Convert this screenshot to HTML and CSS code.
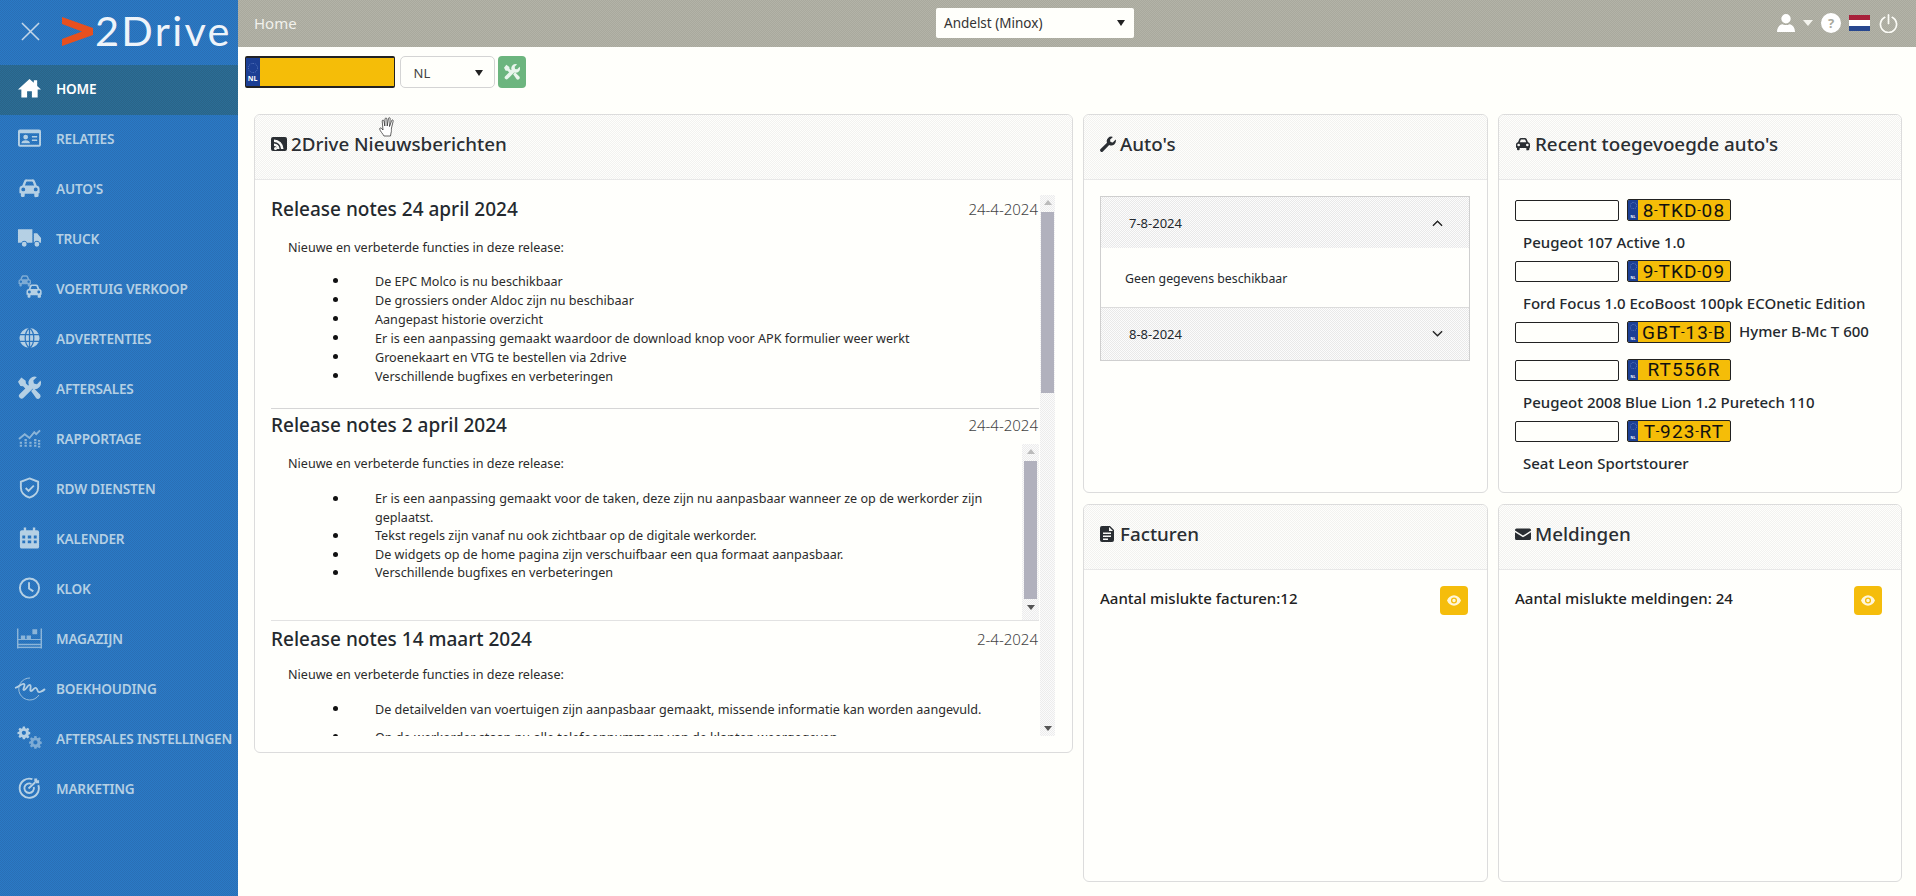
FILE: index.html
```html
<!DOCTYPE html>
<html lang="nl">
<head>
<meta charset="utf-8">
<title>2Drive</title>
<link rel="stylesheet" href="styles.css">
</head>
<body>
<div class="app">
  <aside class="sidebar">
    <div class="brand">
      <svg class="close" viewBox="0 0 20 20"><path d="M1 1l18 18M19 1L1 19"/></svg>
      <svg class="chevron" viewBox="0 0 31 29"><path d="M0 0l31 11v7L0 29v-7l20-7.500L0 7z"/></svg>
      <span class="logo">2Drive</span>
    </div>
    <nav class="menu">
      <a class="item active"><svg class="ico" viewBox="0 0 24 24"><path d="M12 2.500 0 13.500h3.500V22h6v-6.500h5V22h6v-8.500H24l-4-3.700V4h-3.500v2.600z"/></svg><span>Home</span></a>
      <a class="item"><svg class="ico" viewBox="0 0 24 24"><path fill-rule="evenodd" d="M2 3h20a2 2 0 0 1 2 2v14a2 2 0 0 1-2 2H2a2 2 0 0 1-2-2V5a2 2 0 0 1 2-2zm0 4v12h20V7zm6 1.500a2.500 2.500 0 1 1 0 5 2.500 2.500 0 0 1 0-5zM3.500 17.500c0-2 2-3.200 4.500-3.200s4.500 1.200 4.500 3.200zM14.500 10H20v1.500h-5.500zm0 3.500H20V15h-5.500z"/></svg><span>Relaties</span></a>
      <a class="item"><svg class="ico" viewBox="0 0 24 24"><use href="#car"/></svg><span>Auto's</span></a>
      <a class="item"><svg class="ico wide" viewBox="0 0 26 24"><path d="M1 3h15v14h-5.500a3.200 3.200 0 0 0-6 0H1zM17.500 7h3.500l4 5v5h-1.300a3.200 3.200 0 0 0-6 0h-.2zM7.500 16a2.500 2.500 0 1 1 0 5 2.500 2.500 0 0 1 0-5zm13.200 0a2.500 2.500 0 1 1 0 5 2.500 2.500 0 0 1 0-5z"/></svg><span>Truck</span></a>
      <a class="item"><svg class="ico wide" viewBox="0 0 26 24"><use href="#car" class="dim" transform="translate(0 -3) scale(.62)"/><use href="#car" transform="translate(8 6) scale(.75)"/></svg><span>Voertuig verkoop</span></a>
      <a class="item"><svg class="ico" viewBox="0 0 24 24"><circle cx="12" cy="12" r="10.500"/><path class="cut" d="M1 8.500h22M1 15.500h22M12 1v22M12 1.500C6 6 6 18 12 22.500M12 1.500C18 6 18 18 12 22.500"/></svg><span>Advertenties</span></a>
      <a class="item"><svg class="ico" viewBox="0 0 24 24"><use href="#tools"/></svg><span>Aftersales</span></a>
      <a class="item"><svg class="ico dimmed" viewBox="0 0 24 24"><path class="line" d="M1 13l6-5 5 4 5-6 2 2 4-4"/><path class="bars" d="M3 16v6M8 13v9M13 16v6M18 13v9M22 14v8"/></svg><span>Rapportage</span></a>
      <a class="item"><svg class="ico" viewBox="0 0 24 24"><path class="line" d="M12 2l9 3.500v6c0 5-3.600 8.800-9 10.500-5.400-1.700-9-5.500-9-10.500v-6z"/><path class="line" d="M8 12l3 3 5.500-5.500"/></svg><span>RDW diensten</span></a>
      <a class="item"><svg class="ico" viewBox="0 0 24 24"><path fill-rule="evenodd" d="M6 1h2.500v3H15.500V1H18v3h2a2 2 0 0 1 2 2v15a2 2 0 0 1-2 2H4a2 2 0 0 1-2-2V6a2 2 0 0 1 2-2h2zM4.500 9.500v3h3v-3zm5.700 0v3h3.600v-3zm6.300 0v3h3v-3zM4.500 14.500v3h3v-3zm5.700 0v3h3.600v-3zm6.300 0v3h3v-3z"/></svg><span>Kalender</span></a>
      <a class="item"><svg class="ico" viewBox="0 0 24 24"><circle class="line" cx="12" cy="12" r="10"/><path class="line" d="M11.500 6v6.500l4.500 3"/></svg><span>Klok</span></a>
      <a class="item"><svg class="ico wide dimmed" viewBox="0 0 26 24"><path d="M0 2h1.500v21H0zM24.500 2H26v21h-1.500zM1 18h24v1.500H1zM1 13h24v1H1zM16 3h5v5h-5zM4 9.500h4.500v4.500H4zM10 9.500h4.500v4.500H10z" /><path d="M1 21h24v1.500H1z"/></svg><span>Magazijn</span></a>
      <a class="item"><svg class="ico wider" viewBox="0 0 34 24"><path class="thin" d="M17 2a11 11 0 1 0 9 17"/><path class="squig" d="M2 12c4-1 7-5 9-4s-2 6 0 6 4-6 6-5-1 6 1 6 3-4 5-3 1 5 4 4 4-2 5-3"/></svg><span>Boekhouding</span></a>
      <a class="item"><svg class="ico wide" viewBox="0 0 26 24"><use href="#gear" transform="translate(0 0) scale(.55)"/><use href="#gear" class="dim" transform="translate(12 10) scale(.55)"/></svg><span>Aftersales instellingen</span></a>
      <a class="item"><svg class="ico" viewBox="0 0 24 24"><path class="line" d="M15 2.800A10 10 0 1 0 21.200 9"/><path class="line" d="M14 7.800A5 5 0 1 0 16.500 11"/><path class="line" d="M11 12.500L18 6"/><path d="M17 2h3v2h2v3h-3l-2-2z"/></svg><span>Marketing</span></a>
    </nav>
  </aside>

  <div class="main">
    <header class="topbar">
      <div class="crumb">Home</div>
      <div class="location"><span>Andelst (Minox)</span><i class="tri"></i></div>
      <div class="tools">
        <svg class="t-user" viewBox="0 0 18 18"><path d="M9 0a4.700 4.700 0 1 1 0 9.400A4.700 4.700 0 0 1 9 0zM0 18c0-4.500 2.500-7.500 5.500-7.800 2.200 1.200 4.800 1.200 7 0C15.500 10.500 18 13.500 18 18z"/></svg>
        <i class="tri light"></i>
        <span class="t-help">?</span>
        <span class="flag"><i class="red"></i><i class="white"></i><i class="blue"></i></span>
        <svg class="t-power" viewBox="0 0 20 20"><path d="M6 3.500a8.500 8.500 0 1 0 8 0M10 1v9"/></svg>
      </div>
    </header>

    <div class="content">
      <div class="toolbar">
        <div class="plate plate-lg"><div class="eu"><span class="stars"></span><span class="nl">NL</span></div></div>
        <div class="country"><span>NL</span><i class="tri"></i></div>
        <button class="tool-btn"><svg viewBox="0 0 24 24"><use href="#tools"/></svg></button>
      </div>

      <div class="grid">
        <section class="card news">
          <h2 class="card-head"><svg class="h-ico" viewBox="0 0 16 16"><path fill-rule="evenodd" d="M2 1h12a2 2 0 0 1 2 2v10a2 2 0 0 1-2 2H2a2 2 0 0 1-2-2V3a2 2 0 0 1 2-2zm1 2.500V6a7 7 0 0 1 7 7h2.500A9.500 9.500 0 0 0 3 3.500zm0 4V10a3 3 0 0 1 3 3h2.500A5.500 5.500 0 0 0 3 7.500zM4.500 11a1.500 1.500 0 1 0 0 3 1.500 1.500 0 0 0 0-3z"/></svg>2Drive Nieuwsberichten</h2>
          <div class="news-body">
            <div class="notes">
              <article class="note first">
                <div class="note-head"><h3>Release notes 24 april 2024</h3><time>24-4-2024</time></div>
                <p class="intro">Nieuwe en verbeterde functies in deze release:</p>
                <ul>
                  <li>De EPC Molco is nu beschikbaar</li>
                  <li>De grossiers onder Aldoc zijn nu beschibaar</li>
                  <li>Aangepast historie overzicht</li>
                  <li>Er is een aanpassing gemaakt waardoor de download knop voor APK formulier weer werkt</li>
                  <li>Groenekaart en VTG te bestellen via 2drive</li>
                  <li>Verschillende bugfixes en verbeteringen</li>
                </ul>
              </article>
              <article class="note second">
                <div class="note-head"><h3>Release notes 2 april 2024</h3><time>24-4-2024</time></div>
                <div class="inner">
                  <div class="inner-text">
                    <p class="intro">Nieuwe en verbeterde functies in deze release:</p>
                    <ul>
                      <li>Er is een aanpassing gemaakt voor de taken, deze zijn nu aanpasbaar wanneer ze op de werkorder zijn geplaatst.</li>
                      <li>Tekst regels zijn vanaf nu ook zichtbaar op de digitale werkorder.</li>
                      <li>De widgets op de home pagina zijn verschuifbaar een qua formaat aanpasbaar.</li>
                      <li>Verschillende bugfixes en verbeteringen</li>
                    </ul>
                  </div>
                  <div class="scrollbar inner-bar"><b class="up"></b><b class="thumb"></b><b class="down"></b></div>
                </div>
              </article>
              <article class="note third">
                <div class="note-head"><h3>Release notes 14 maart 2024</h3><time>2-4-2024</time></div>
                <p class="intro">Nieuwe en verbeterde functies in deze release:</p>
                <ul>
                  <li>De detailvelden van voertuigen zijn aanpasbaar gemaakt, missende informatie kan worden aangevuld.</li>
                  <li>Op de werkorder staan nu alle telefoonnummers van de klanten weergegeven</li>
                </ul>
              </article>
            </div>
            <div class="scrollbar outer-bar"><b class="up"></b><b class="thumb"></b><b class="spacer"></b><b class="down"></b></div>
          </div>
        </section>

        <section class="card">
          <h2 class="card-head"><svg class="h-ico" viewBox="0 0 16 16"><path d="M15.700 3.600l-2.900 2.800-2.300-.4-.5-2.300L12.900.9A4.600 4.600 0 0 0 7 6.800L.6 13.100a1.600 1.600 0 0 0 2.300 2.300L9.200 9a4.600 4.600 0 0 0 6.500-5.400z"/></svg>Auto's</h2>
          <div class="accordion">
            <div class="acc-head"><span>7-8-2024</span><svg viewBox="0 0 12 8"><path d="M1 7l5-5 5 5"/></svg></div>
            <div class="acc-body">Geen gegevens beschikbaar</div>
            <div class="acc-head last"><span>8-8-2024</span><svg viewBox="0 0 12 8"><path d="M1 1l5 5 5-5"/></svg></div>
          </div>
        </section>

        <section class="card">
          <h2 class="card-head"><svg class="h-ico" viewBox="0 0 24 24"><use href="#car"/></svg>Recent toegevoegde auto's</h2>
          <div class="cars">
            <div class="car"><div class="car-line"><input class="box"><div class="plate plate-sm"><div class="eu"><span class="stars"></span><span class="nl">NL</span></div><span class="reg">8<i>-</i>TKD<i>-</i>08</span></div></div><div class="car-name">Peugeot 107 Active 1.0</div></div>
            <div class="car"><div class="car-line"><input class="box"><div class="plate plate-sm"><div class="eu"><span class="stars"></span><span class="nl">NL</span></div><span class="reg">9<i>-</i>TKD<i>-</i>09</span></div></div><div class="car-name">Ford Focus 1.0 EcoBoost 100pk ECOnetic Edition</div></div>
            <div class="car inline"><div class="car-line"><input class="box"><div class="plate plate-sm"><div class="eu"><span class="stars"></span><span class="nl">NL</span></div><span class="reg">GBT<i>-</i>13<i>-</i>B</span></div><div class="car-name">Hymer B-Mc T 600</div></div></div>
            <div class="car"><div class="car-line"><input class="box"><div class="plate plate-sm"><div class="eu"><span class="stars"></span><span class="nl">NL</span></div><span class="reg">RT556R</span></div></div><div class="car-name">Peugeot 2008 Blue Lion 1.2 Puretech 110</div></div>
            <div class="car"><div class="car-line"><input class="box"><div class="plate plate-sm"><div class="eu"><span class="stars"></span><span class="nl">NL</span></div><span class="reg">T<i>-</i>923<i>-</i>RT</span></div></div><div class="car-name">Seat Leon Sportstourer</div></div>
          </div>
        </section>

        <section class="card">
          <h2 class="card-head"><svg class="h-ico" viewBox="0 0 16 16"><path fill-rule="evenodd" d="M2 0h8l4 4v10a2 2 0 0 1-2 2H2a2 2 0 0 1-2-2V2a2 2 0 0 1 2-2zm1 6.500V8h8V6.500zm0 3V11h8V9.500zm0 3V14h5v-1.500zM9 1v4h4z"/></svg>Facturen</h2>
          <div class="stat"><span>Aantal mislukte facturen:12</span><button class="eye"><svg viewBox="0 0 16 12"><use href="#eye"/></svg></button></div>
        </section>

        <section class="card">
          <h2 class="card-head"><svg class="h-ico" viewBox="0 0 16 16"><path d="M1.500 2.500h13A1.500 1.500 0 0 1 16 4v.5L8 9.500 0 4.500V4a1.500 1.500 0 0 1 1.500-1.500zM0 6.300l8 5 8-5V12.500A1.500 1.500 0 0 1 14.500 14h-13A1.500 1.500 0 0 1 0 12.500z"/></svg>Meldingen</h2>
          <div class="stat"><span>Aantal mislukte meldingen: 24</span><button class="eye"><svg viewBox="0 0 16 12"><use href="#eye"/></svg></button></div>
        </section>
      </div>

      <svg class="cursor" viewBox="0 0 18 20"><path d="M5 19c-1-2-4-5-4.300-7-.2-1.300 1.300-1.300 2-.5L4 13 3.200 4c0-1.200 1.600-1.200 1.800 0l.8 5L6 2c.1-1.300 1.800-1.300 1.900 0l.3 7L9.500 1.500c.2-1.200 1.800-1 1.700.3L10.500 9.500 12.700 3.500c.4-1.100 1.800-.6 1.500.6L12.500 11c-.3 2 .2 3-.5 5l-.5 3z"/></svg>
    </div>
  </div>
</div>

<svg class="defs" width="0" height="0">
  <defs>
    <symbol id="car" viewBox="0 0 24 24" overflow="visible"><path fill-rule="evenodd" d="M4.500 9.500l2-5A3 3 0 0 1 9.200 3h5.600a3 3 0 0 1 2.700 1.500l2 5c1.700.3 3 1.600 3 3.500v4.500h-1V20a1.500 1.500 0 0 1-1.500 1.500h-1A1.500 1.500 0 0 1 17 20v-2H7v2a1.500 1.500 0 0 1-1.500 1.500h-1A1.500 1.500 0 0 1 3 20v-2.500H1.500V13c0-1.900 1.300-3.200 3-3.500zM7.200 9.500h9.600L15.500 6a1 1 0 0 0-.9-.700H9.400a1 1 0 0 0-.9.700zM5.500 15.500a2 2 0 1 0 0-4 2 2 0 0 0 0 4zm13 0a2 2 0 1 0 0-4 2 2 0 0 0 0 4z"/></symbol>
    <symbol id="tools" viewBox="0 0 24 24" overflow="visible"><path d="M3.500 1L8 4.500l.3 2.800 3 3-3 3-3-3-2.800-.3L0 5.500z"/><path d="M23.500 4.200L19.800 8l-3.200-.6-.6-3.200L19.700.5a6.500 6.500 0 0 0-8.400 8.300L1.800 18.300a2.800 2.800 0 0 0 4 4l9.500-9.500a6.500 6.500 0 0 0 8.200-8.600z"/><path d="M13.700 15.200l2.900-2.900 6.400 6.400a2.900 2.900 0 0 1-4 4.100z"/></symbol>
    <symbol id="gear" viewBox="0 0 24 24" overflow="visible"><path fill-rule="evenodd" d="M10 0h4l.7 3.400 1.900.8L19.500 2.300l2.800 2.800-1.900 2.900.8 1.900L24 10.700v3.900l-2.800.700-.8 1.900 1.900 2.900-2.800 2.800-2.900-1.900-1.900.8L14 24h-4l-.7-3.300-1.900-.8-2.900 1.900-2.800-2.800 1.900-2.900-.8-1.900L0 14.600v-3.900l2.800-.7.8-1.900-1.900-2.900L4.500 2.300l2.900 1.900 1.900-.8zM12 8a4 4 0 1 0 0 8 4 4 0 0 0 0-8z"/></symbol>
    <symbol id="eye" viewBox="0 0 16 12" overflow="visible"><path fill-rule="evenodd" d="M8 0c3.500 0 6.500 2.400 8 6-1.500 3.600-4.500 6-8 6S1.500 9.600 0 6c1.500-3.600 4.500-6 8-6zm0 2.500a3.500 3.500 0 1 0 0 7 3.500 3.500 0 0 0 0-7zM8 4a2 2 0 1 1 0 4 2 2 0 0 1 0-4z"/></symbol>
  </defs>
</svg>
</body>
</html>
```

FILE: styles.css
```css
* { box-sizing: border-box; }
html, body { margin: 0; height: 100%; overflow: hidden; }
body {
  font-family: "Noto Sans", "Open Sans", sans-serif;
  color: #24292e;
  background: #fffffb;
  font-size: 13px;
}
.defs { display: block; height: 0; }
.app { display: flex; height: 896px; }

/* sidebar */
.sidebar {
  width: 238px; flex: none;
  background: repeating-conic-gradient(#2a7ac6 0 25%, #2a6fb5 0 50%) 0 0 / 2px 2px;
  color: #b5d0e4;
}
.brand { height: 65px; display: flex; align-items: flex-start; }
.close { width: 19px; height: 19px; margin: 22px 0 0 21px; fill: none; stroke: #c4d8ea; stroke-width: 1.6; flex: none; }
.chevron { width: 31px; height: 29px; margin: 17px 0 0 22px; fill: #e8501e; flex: none; }
.logo { font: 400 41.500px/1 "Lato", sans-serif; color: #eef4fa; margin: 10px 0 0 2px; letter-spacing: 2.300px; }
.item {
  display: flex; align-items: center; height: 50px; padding: 0 0 4px 18px; gap: 15px;
  font-weight: 600; font-size: 13.600px; text-transform: uppercase; letter-spacing: -.2px;
}
.item.active {
  color: #fff;
  background: repeating-conic-gradient(#2b6d96 0 25%, #2a6488 0 50%) 0 0 / 2px 2px;
}
.ico { width: 23px; height: 24px; fill: currentColor; flex: none; overflow: visible; }
.ico.wide { width: 25px; margin-left: -1px; margin-right: -1px; }
.ico.wider { width: 34px; margin-left: -5px; margin-right: -6px; }
.ico .dim { opacity: .6; }
.ico.dimmed { opacity: .7; }
.ico .cut { fill: none; stroke: #2a74bd; stroke-width: 1.3; }
.ico .line { fill: none; stroke: currentColor; stroke-width: 2; }
.ico .bars { fill: none; stroke: currentColor; stroke-width: 2.400; stroke-dasharray: 2 1; }
.ico .thin { fill: none; stroke: currentColor; stroke-width: .8; }
.ico .squig { fill: none; stroke: currentColor; stroke-width: 1.800; }

/* topbar */
.main { flex: 1; min-width: 0; display: flex; flex-direction: column; }
.topbar {
  height: 47px; flex: none; position: relative;
  display: flex; align-items: center; justify-content: space-between;
  padding: 0 18px 1px 16px;
  background: repeating-conic-gradient(#a9a99d 0 25%, #b3b3a8 0 50%) 0 0 / 2px 2px;
}
.crumb { color: #f1f1ec; font-size: 15px; width: 100px; }
.location {
  position: absolute; left: 698px; top: 8px; width: 198px; height: 30px;
  background: #fffffb; border-radius: 2px; display: flex; align-items: center; justify-content: space-between;
  padding: 0 9px 0 8px; font-size: 13.500px; color: #333;
}
.tri { width: 0; height: 0; border: 4.500px solid transparent; border-top: 6px solid #222; border-bottom: 0; display: block; }
.tri.light { border-top-color: #f4f4ee; border-left-width: 5px; border-right-width: 5px; }
.tools { display: flex; align-items: center; margin-left: auto; }
.t-user { width: 18px; height: 18px; fill: #fff; margin-right: 8px; }
.t-help { width: 20px; height: 20px; border-radius: 50%; background: #fff; color: #a9a99d; margin-left: 8px; font-weight: 700; font-size: 13px; line-height: 20px; text-align: center; }
.flag { width: 21px; height: 16px; margin-left: 8px; display: flex; flex-direction: column; }
.flag i { flex: 1; display: block; }
.flag .red { background: #a8213b; }
.flag .white { background: #fff; }
.flag .blue { background: #27478f; }
.t-power { width: 19px; height: 19px; margin-left: 9px; fill: none; stroke: #fbfbf6; stroke-width: 1.800; stroke-linecap: round; }

/* content */
.content { position: relative; padding: 9px 0 0 16px; flex: 1; }
.toolbar { display: flex; height: 32px; }
.plate { background: #f5bd08; border: 1px solid #222; border-radius: 2px; display: flex; overflow: hidden; }
.plate-lg { width: 150px; border-width: 2px 1.500px; margin-left: -9.500px; }
.eu { background: #1c3f94; color: #fff; display: flex; flex-direction: column; align-items: center; justify-content: space-between; flex: none; font-weight: 700; }
.plate-lg .eu { width: 14px; padding: 5px 0 3px; font-size: 7px; line-height: 8px; }
.stars { display: block; border: 1px dotted #5573bb; border-radius: 50%; width: 10px; height: 10px; }
.plate-sm .eu { width: 10px; padding: 2px 0 1px; font-size: 3.500px; line-height: 4px; }
.plate-sm .stars { width: 7px; height: 7px; }
.country {
  width: 95px; margin-left: 5px; border: 1px solid #d4d4d4; border-radius: 5px; background: #fffffb;
  display: flex; align-items: center; justify-content: space-between; padding: 2px 11px 0 13px; color: #444; font-size: 13px;
}
.tool-btn { width: 28px; margin-left: 3px; padding: 8px 6px; border: 0; border-radius: 4px; background: #6cb57e; }
.tool-btn svg { width: 16px; height: 16px; fill: #e9f5ec; display: block; }

.grid {
  display: grid; margin-top: 26px;
  grid-template-columns: 819px 405px 404px;
  grid-template-rows: 379px 378px;
  gap: 11px 10px;
}
.card { border: 1px solid #dcdcdc; border-radius: 6px; overflow: hidden; background: #fffffc; }
.news { grid-row: 1 / span 2; height: 639px; }
.card-head {
  margin: 0; height: 65px; padding: 16px 16px 0; display: flex; align-items: flex-start;
  font-size: 18.800px; line-height: 27px; font-weight: 500; color: #2a2e33;
  background: repeating-conic-gradient(#f2f2f0 0 25%, #fefefc 0 50%) 0 0 / 2px 2px;
  border-bottom: 1px solid #e8e8e8;
}
.h-ico { width: 16px; height: 16px; margin: 5px 4px 0 0; fill: #2a2e33; flex: none; }

/* news */
.news-body { display: flex; height: 557px; padding: 15px 17px 0 16px; }
.news-body > * { height: 541px; }
.notes { width: 769px; overflow: hidden; }
.note-head { display: flex; justify-content: space-between; align-items: center; height: 27px; padding-right: 1px; }
h3 { margin: 0; font-size: 19px; font-weight: 500; color: #24292e; }
time { font-size: 15px; color: #444; font-weight: 300; }
.intro { margin: 0; padding-left: 17px; line-height: 19px; font-weight: 400; color: #2b2b2b; font-size: 12.600px; }
ul { list-style: none; margin: 0; padding: 0 0 0 104px; font-weight: 400; font-size: 12.600px; line-height: 19px; color: #2b2b2b; }
li::before { content: ""; float: left; width: 5px; height: 5px; border-radius: 50%; background: #111; margin: 6px 0 0 -42px; }
.first { padding-bottom: 22px; border-bottom: 1px solid #d6d6d6; }
.first .intro { margin-top: 16px; }
.first ul { margin-top: 15px; }
.second { padding-top: 2px; border-bottom: 1px solid #e2e2e2; }
.inner { display: flex; height: 176px; margin-top: 6px; overflow: hidden; }
.inner-text { flex: 1; padding-top: 10px; min-width: 0; }
.inner-text ul { margin-top: 17px; line-height: 18.500px; padding-right: 6px; }
.third { padding-top: 4px; }
.third .intro { margin-top: 13px; }
.third ul { margin-top: 16px; }
.third li + li { margin-top: 9px; }

/* scrollbars */
.scrollbar { display: flex; flex-direction: column; align-items: center; flex: none; background: repeating-conic-gradient(#ececec 0 25%, #fbfbfb 0 50%) 0 0 / 2px 2px; }
.outer-bar { width: 15px; margin-left: 1px; }
.inner-bar { width: 17px; }
.thumb { display: block; background: #b1b1bd; width: 100%; }
.inner-bar .thumb { width: 13px; height: 138px; }
.outer-bar .thumb { width: 13px; height: 181px; }
.up, .down { display: block; width: 0; height: 0; border: 4px solid transparent; }
.up { border-bottom: 5px solid #bbb; border-top: 0; margin: 5px 0 7px; }
.down { border-top: 5px solid #555; border-bottom: 0; margin: 6px 0 5px; }
.spacer { display: block; flex: 1; }

/* auto's */
.accordion { margin: 16px 17px 0 16px; border: 1px solid #cfcfcf; }
.acc-head {
  height: 51px; display: flex; align-items: center; justify-content: space-between; padding: 0 26px 0 28px;
  font-size: 13px; background: repeating-conic-gradient(#e9e9e9 0 25%, #fcfcfc 0 50%) 0 0 / 2px 2px;
}
.acc-head svg { width: 11px; height: 8px; fill: none; stroke: #222; stroke-width: 1.500; }
.acc-head.last { height: 53px; border-top: 1px solid #dcdcdc; }
.acc-body { height: 59px; display: flex; align-items: center; padding: 2px 0 0 24px; font-size: 12.300px; font-weight: 400; }

/* recent */
.cars { padding: 19px 16px 0; }
.car { margin-bottom: 7px; }
.car.inline { padding-bottom: 9px; }
.car-line { display: flex; align-items: flex-start; height: 22px; }
.box { width: 104px; height: 21px; margin: 1px 8px 0 0; padding: 0; border: 1px solid #222; border-radius: 2px; background: #fffffb; }
.plate-sm { width: 104px; height: 22px; }
.reg { flex: 1; text-align: center; font: 400 19px/20px "Roboto", sans-serif; letter-spacing: 1.200px; color: #111; }
.reg i { font-style: normal; font-size: 13px; vertical-align: 3px; margin: 0 -.5px; }
.car-name { font-size: 15px; font-weight: 500; line-height: 21px; padding-left: 8px; margin-top: 11px; color: #24292e; white-space: nowrap; }
.inline .car-name { margin-top: 0; }

/* stat */
.stat { display: flex; justify-content: space-between; align-items: flex-start; padding: 16px 19px 0 16px; font-size: 15px; font-weight: 500; color: #222; }
.stat span { margin-top: 2px; }
.eye { width: 28px; height: 29px; border: 0; border-radius: 4px; background: #f5bd0b; padding: 0; display: flex; align-items: center; justify-content: center; }
.eye svg { width: 14px; height: 11px; fill: #fff6d8; }

.cursor { position: absolute; left: 141px; top: 70px; width: 18px; height: 20px; fill: #fff; stroke: #222; stroke-width: .7; }
```
